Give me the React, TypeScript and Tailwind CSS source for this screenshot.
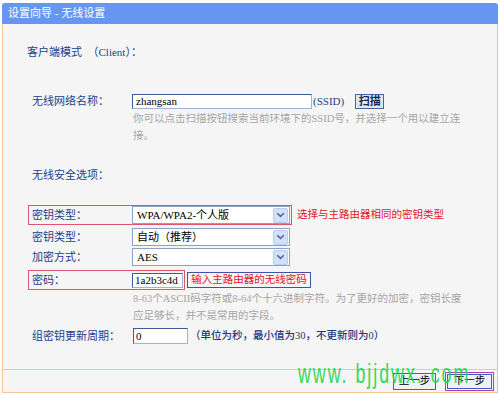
import React from "react";

function Chevron() {
  return (
    <div className="mr-[1px] flex h-[15px] w-[15px] items-center justify-center rounded-[2px] border border-[#b9cdef] bg-[#d3e0f7]">
      <svg width="9" height="6" viewBox="0 0 9 6">
        <path d="M1.2 1.2 L4.5 4.4 L7.8 1.2" fill="none" stroke="#4d6aa6" strokeWidth="1.6" />
      </svg>
    </div>
  );
}

function Select({ value }: { value: string }) {
  return (
    <div className="flex h-[18px] w-[158px] items-center border border-[#8aa3c4] bg-white">
      <span className="flex-1 whitespace-nowrap pl-[4px] text-[11px] leading-none text-black">{value}</span>
      <Chevron />
    </div>
  );
}

export default function App() {
  return (
    <div className="relative h-[395px] w-[500px] overflow-hidden bg-white font-['Liberation_Serif','Noto_Sans_CJK_SC',serif]">
      <div className="ml-[2px] mt-[3px] w-[496px]">
        <div className="flex h-[21px] items-center rounded-t-[3px] bg-[#6596f2] pl-[6px] text-[11px] text-white">
          设置向导 - 无线设置
        </div>
        <div className="h-[345px] border-x border-[#f3c590] bg-[#f5f5f5] pt-[20px] text-[11px] text-[#233f8e]">
          <div className="flex h-[16px] items-center whitespace-nowrap pl-[24px]">
            客户端模式&nbsp;&nbsp;（Client）：
          </div>

          <div className="mt-[33px] flex h-[16px] items-center pl-[29px]">
            <span className="w-[100px]">无线网络名称：</span>
            <div className="flex h-[15px] w-[180px] items-center border border-t-[#3e5a98] border-l-[#3e5a98] border-r-[#9fb3d4] border-b-[#9fb3d4] bg-white pl-[3px] text-[11px] text-black">
              zhangsan
            </div>
            <span className="ml-[1px] text-[11px]">(SSID)</span>
            <div className="ml-[11px] flex h-[15px] w-[29px] items-center justify-center border border-[#4a63a3] bg-[#dfe6f3] text-[11px] font-bold text-[#1a2550]">
              扫描
            </div>
          </div>

          <div className="mt-[1px] pl-[130px] text-[10.5px] leading-[17px] text-[#a6a6a6]">
            <div className="whitespace-nowrap">你可以点击扫描按钮搜索当前环境下的SSID号，并选择一个用以建立连</div>
            <div className="whitespace-nowrap">接。</div>
          </div>

          <div className="mt-[23px] flex h-[16px] items-center pl-[29px]">无线安全选项：</div>

          <div className="ml-[25px] mt-[22px]">
            <div className="flex items-center">
              <div className="flex h-[20px] w-[264px] items-center border border-[#e2546e] pl-[3px]">
                <span className="w-[100px]">密钥类型：</span>
                <Select value="WPA/WPA2-个人版" />
              </div>
              <span className="ml-[5px] whitespace-nowrap text-[10.5px] text-[#e4141e]">选择与主路由器相同的密钥类型</span>
            </div>
            <div className="mt-[2px] flex h-[20px] w-[264px] items-center border border-transparent pl-[3px]">
              <span className="w-[100px]">密钥类型：</span>
              <Select value="自动（推荐）" />
            </div>
            <div className="flex h-[20px] w-[264px] items-center border border-transparent pl-[3px]">
              <span className="w-[100px]">加密方式：</span>
              <Select value="AES" />
            </div>
            <div className="mt-[3px] flex items-center">
              <div className="flex h-[20px] w-[157px] items-center border border-[#e2546e] pl-[3px]">
                <span className="w-[100px]">密码：</span>
                <div className="flex h-[15px] w-[51px] items-center border border-t-[#3e5a98] border-l-[#3e5a98] border-r-[#9fb3d4] border-b-[#9fb3d4] bg-white pl-[2px] text-[11px] text-black">
                  1a2b3c4d
                </div>
              </div>
              <div className="ml-[2px] flex h-[16px] w-[124px] items-center justify-center whitespace-nowrap border border-[#3d54a6] text-[10.5px] text-[#e4141e]">
                输入主路由器的无线密码
              </div>
            </div>
          </div>

          <div className="pl-[130px] text-[10.5px] leading-[17px] text-[#a6a6a6]">
            <div className="whitespace-nowrap">8-63个ASCII码字符或8-64个十六进制字符。为了更好的加密，密钥长度</div>
            <div className="whitespace-nowrap">应足够长，并不是常用的字段。</div>
          </div>

          <div className="mt-[4px] flex h-[16px] items-center pl-[29px]">
            <span className="w-[101px]">组密钥更新周期：</span>
            <div className="flex h-[16px] w-[55px] items-center border border-t-[#3e5a98] border-l-[#3e5a98] border-r-[#9fb3d4] border-b-[#9fb3d4] bg-white pl-[2px] text-[11px] text-black">
              0
            </div>
            <span className="ml-[2px] whitespace-nowrap text-[10.5px] font-medium text-[#1f3680]">（单位为秒，最小值为30，不更新则为0）</span>
          </div>
        </div>
        <div className="flex h-[24px] items-center justify-end border border-[#f3c590] bg-[#f5f5f5] pr-[3px]">
          <div className="flex h-[17px] w-[43px] items-center justify-center border border-[#3c62c8] bg-[#eef1f6] text-[10.5px] text-black">
            上一步
          </div>
          <div className="ml-[9px] flex h-[19px] w-[49px] items-center justify-center border border-[#b03cc0] p-[1px]">
            <div className="flex h-full w-full items-center justify-center border border-[#3c62c8] bg-[#eef1f6] text-[10.5px] text-black">
              下一步
            </div>
          </div>
        </div>
      </div>
      <div className="pointer-events-none absolute left-[298px] top-[361px] origin-left scale-x-[0.66] whitespace-nowrap font-['Liberation_Sans',sans-serif] text-[27px] leading-[27px] tracking-[3px] text-[#22d84a] opacity-90">
        www. bjjdwx. com
      </div>
    </div>
  );
}
